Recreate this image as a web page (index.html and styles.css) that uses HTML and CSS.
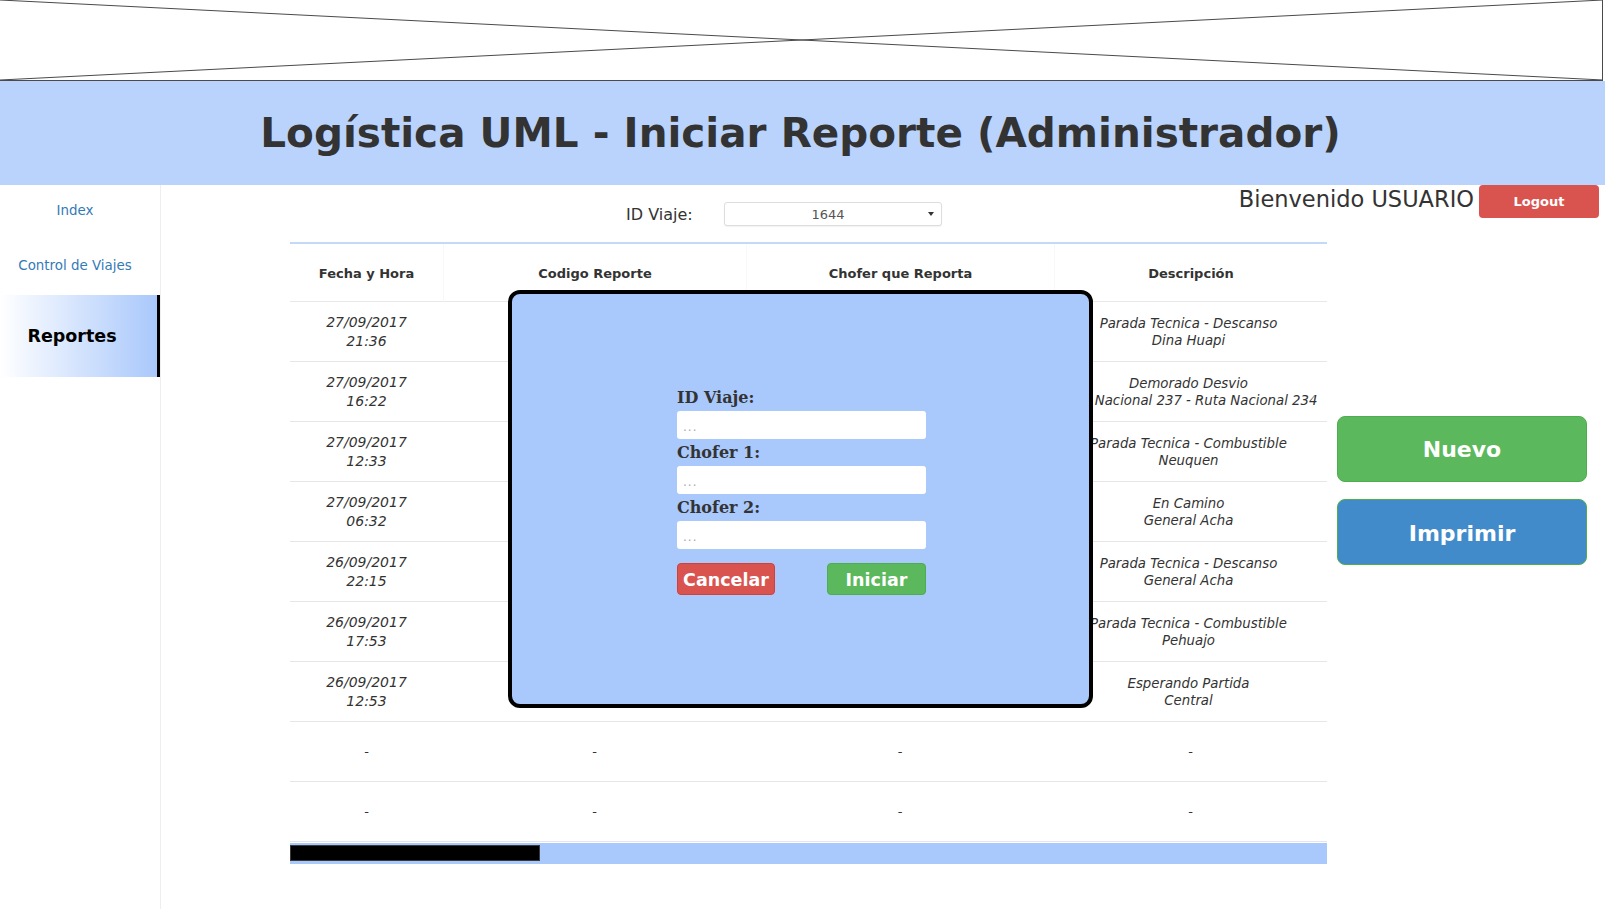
FILE: index.html
```html
<!DOCTYPE html>
<html lang="es">
<head>
<meta charset="utf-8">
<title>Logística UML - Iniciar Reporte (Administrador)</title>
<link rel="stylesheet" href="styles.css">
</head>
<body>
<div class="banner">
  <svg class="banner-x" width="1605" height="81" viewBox="0 0 1605 81" preserveAspectRatio="none">
    <line x1="0" y1="0" x2="1603" y2="80" />
    <line x1="0" y1="80" x2="1603" y2="0" />
    <line x1="0" y1="80.5" x2="1603" y2="80.5" />
    <line x1="1602.5" y1="0" x2="1602.5" y2="81" />
  </svg>
</div>
<header class="page-header">
  <h1 class="page-title">Logística UML - Iniciar Reporte (Administrador)</h1>
</header>
<div class="main">
  <nav class="sidebar">
    <a class="nav-item" href="#">Index</a>
    <a class="nav-item" href="#">Control de Viajes</a>
    <a class="nav-item active" href="#">Reportes</a>
  </nav>
  <section class="content">
    <div class="topbar">
      <div class="trip-filter">
        <label class="trip-label" for="viaje">ID Viaje:</label>
        <div class="select-wrap">
          <select id="viaje" class="trip-select"><option>1644</option></select>
        </div>
      </div>
      <div class="userbox">
        <span class="welcome">Bienvenido USUARIO</span>
        <button class="btn-logout">Logout</button>
      </div>
    </div>
    <div class="body-row">
      <div class="table-wrap">
        <table class="reports">
          <colgroup>
            <col class="c1"><col class="c2"><col class="c3"><col class="c4">
          </colgroup>
          <thead>
            <tr><th>Fecha y Hora</th><th>Codigo Reporte</th><th>Chofer que Reporta</th><th>Descripción</th></tr>
          </thead>
          <tbody>
            <tr><td class="date">27/09/2017<br>21:36</td><td></td><td></td><td class="desc">Parada Tecnica - Descanso<br>Dina Huapi</td></tr>
            <tr><td class="date">27/09/2017<br>16:22</td><td></td><td></td><td class="desc">Demorado Desvio<br>Ruta Nacional 237 - Ruta Nacional 234</td></tr>
            <tr><td class="date">27/09/2017<br>12:33</td><td></td><td></td><td class="desc">Parada Tecnica - Combustible<br>Neuquen</td></tr>
            <tr><td class="date">27/09/2017<br>06:32</td><td></td><td></td><td class="desc">En Camino<br>General Acha</td></tr>
            <tr><td class="date">26/09/2017<br>22:15</td><td></td><td></td><td class="desc">Parada Tecnica - Descanso<br>General Acha</td></tr>
            <tr><td class="date">26/09/2017<br>17:53</td><td></td><td></td><td class="desc">Parada Tecnica - Combustible<br>Pehuajo</td></tr>
            <tr><td class="date">26/09/2017<br>12:53</td><td></td><td></td><td class="desc">Esperando Partida<br>Central</td></tr>
            <tr class="empty"><td>-</td><td>-</td><td>-</td><td>-</td></tr>
            <tr class="empty"><td>-</td><td>-</td><td>-</td><td>-</td></tr>
          </tbody>
        </table>
        <div class="hscroll"><div class="hscroll-thumb"></div></div>
      </div>
      <div class="actions">
        <button class="btn-big btn-new">Nuevo</button>
        <button class="btn-big btn-print">Imprimir</button>
      </div>
    </div>
  </section>
</div>

<div class="modal">
  <form class="modal-form">
    <label class="m-label" for="m-viaje">ID Viaje:</label>
    <input class="m-input" id="m-viaje" type="text" placeholder="...">
    <label class="m-label" for="m-chofer1">Chofer 1:</label>
    <input class="m-input" id="m-chofer1" type="text" placeholder="...">
    <label class="m-label" for="m-chofer2">Chofer 2:</label>
    <input class="m-input" id="m-chofer2" type="text" placeholder="...">
    <div class="m-buttons">
      <button type="button" class="m-btn m-cancel">Cancelar</button>
      <button type="button" class="m-btn m-start">Iniciar</button>
    </div>
  </form>
</div>
</body>
</html>
```
FILE: styles.css
```css
* { box-sizing: border-box; }

html, body {
  margin: 0;
  padding: 0;
  background: #fff;
}

body {
  font-family: "DejaVu Sans", Verdana, sans-serif;
  color: #333;
  width: 1605px;
  min-height: 909px;
  overflow: hidden;
}

.banner {
  height: 81px;
}

.banner-x {
  display: block;
}

.banner-x line {
  stroke: #4a4a4a;
  stroke-width: 1;
}

.page-header {
  height: 104px;
  background: #bad3fd;
  display: flex;
  align-items: center;
  justify-content: center;
}

.page-title {
  margin: 0;
  font-size: 40.5px;
  font-weight: bold;
  color: #333;
  padding-bottom: 1px;
  padding-right: 4px;
}

.main {
  display: flex;
  min-height: 724px;
}

.sidebar {
  width: 161px;
  flex: none;
  border-right: 1px solid #eee;
  display: flex;
  flex-direction: column;
}

.nav-item {
  display: flex;
  align-items: center;
  justify-content: center;
  height: 55px;
  padding-right: 10px;
  padding-bottom: 4px;
  font-size: 13.4px;
  color: #337ab7;
  text-decoration: none;
}

.nav-item.active {
  height: 82px;
  font-size: 17.5px;
  font-weight: bold;
  color: #000;
  background: linear-gradient(to right, #ffffff 0%, #a9c8fb 100%);
  border-right: 3px solid #000;
  padding-right: 13px;
  padding-bottom: 0;
}

.content {
  flex: 1;
  display: flex;
  flex-direction: column;
}

.topbar {
  height: 57px;
  display: flex;
  align-items: flex-start;
}

.trip-filter {
  margin-left: 465px;
  margin-top: 17px;
  height: 24px;
  display: flex;
  align-items: center;
}

.trip-label {
  font-size: 16px;
  color: #333;
  width: 98px;
}

.select-wrap {
  position: relative;
  width: 218px;
  height: 24px;
}

.select-wrap::after {
  content: "";
  position: absolute;
  right: 8px;
  top: 10px;
  border-left: 3px solid transparent;
  border-right: 3px solid transparent;
  border-top: 4px solid #333;
  pointer-events: none;
}

.trip-select {
  appearance: none;
  -webkit-appearance: none;
  width: 218px;
  height: 24px;
  border: 1px solid #ddd;
  border-radius: 3px;
  background: #fff;
  box-shadow: 0 1px 1px rgba(0,0,0,0.05);
  font-family: "DejaVu Sans", Verdana, sans-serif;
  font-size: 13px;
  color: #555;
  text-align: center;
  text-align-last: center;
  padding: 0 10px 0 0;
}

.userbox {
  margin-left: auto;
  margin-right: 6px;
  display: flex;
  align-items: center;
}

.welcome {
  font-size: 22.5px;
  color: #333;
  margin-right: 5px;
  padding-bottom: 5px;
}

.btn-logout {
  width: 120px;
  height: 33px;
  border: none;
  border-radius: 4px;
  background: #d9534f;
  color: #fff;
  font-family: "DejaVu Sans", Verdana, sans-serif;
  font-size: 13px;
  font-weight: bold;
  padding: 0;
}

.body-row {
  display: flex;
  align-items: flex-start;
}

.table-wrap {
  margin-left: 129px;
  width: 1037px;
}

.reports {
  width: 1037px;
  table-layout: fixed;
  border-collapse: separate;
  border-spacing: 0;
  border-top: 2px solid #c4d9f7;
}

.c1 { width: 153px; }
.c2 { width: 303px; }
.c3 { width: 308px; }
.c4 { width: 273px; }

.reports th {
  height: 58px;
  padding: 0 8px;
  padding-top: 2px;
  font-size: 13px;
  font-weight: bold;
  color: #333;
  text-align: center;
  vertical-align: middle;
  border-bottom: 1px solid #e8e8e8;
  border-left: 1px solid #f8f8f8;
}

.reports th:first-child {
  border-left: none;
}

.reports td {
  height: 60px;
  padding: 0 8px;
  text-align: center;
  vertical-align: middle;
  border-bottom: 1px solid #e6e6e6;
  font-size: 13px;
  color: #333;
}

.reports td.date {
  font-size: 14px;
  line-height: 19px;
  font-style: italic;
}

.reports td.desc {
  font-size: 13.3px;
  line-height: 17px;
  font-style: italic;
  white-space: nowrap;
  padding: 0 6px 0 2px;
}

.hscroll {
  margin-top: 1px;
  height: 21px;
  background: #a9c8fb;
  padding-top: 2px;
}

.hscroll-thumb {
  width: 250px;
  height: 16px;
  background: #000;
  border: 1px solid #3a3a3a;
}

.actions {
  margin-left: 10px;
  padding-top: 174px;
  display: flex;
  flex-direction: column;
  gap: 17px;
}

.btn-big {
  width: 250px;
  height: 66px;
  border-radius: 8px;
  border: 1px solid #4cae4c;
  color: #fff;
  font-family: "DejaVu Sans", Verdana, sans-serif;
  font-size: 22px;
  font-weight: bold;
  padding: 0;
}

.btn-new {
  background: #5cb85c;
}

.btn-print {
  background: #428bca;
  padding-top: 2px;
}

.modal {
  position: absolute;
  left: 508px;
  top: 290px;
  width: 585px;
  height: 418px;
  background: #a9c8fb;
  border: 4px solid #000;
  border-radius: 12px;
  padding: 94px 0 0 165px;
}

.modal-form {
  width: 249px;
  display: flex;
  flex-direction: column;
}

.m-label {
  font-family: "DejaVu Serif", Georgia, serif;
  font-weight: bold;
  font-size: 16px;
  line-height: 20px;
  color: #333;
  margin-bottom: 3px;
}

.m-input {
  height: 28px;
  width: 249px;
  border: none;
  border-radius: 3px;
  background: #fff;
  padding: 4px 0 0 6px;
  margin-bottom: 4px;
  font-size: 12px;
  font-family: "DejaVu Sans", Verdana, sans-serif;
}

.m-input::placeholder {
  color: #aaa;
  letter-spacing: 1px;
}

.m-buttons {
  margin-top: 10px;
  display: flex;
  justify-content: space-between;
}

.m-btn {
  height: 32px;
  border-radius: 4px;
  color: #fff;
  font-family: "DejaVu Sans", Verdana, sans-serif;
  font-weight: bold;
  font-size: 17.5px;
  padding: 1px 0 0 0;
}

.m-cancel {
  width: 98px;
  background: #d9534f;
  border: 1px solid #d43f3a;
}

.m-start {
  width: 99px;
  background: #5cb85c;
  border: 1px solid #4cae4c;
}
```
